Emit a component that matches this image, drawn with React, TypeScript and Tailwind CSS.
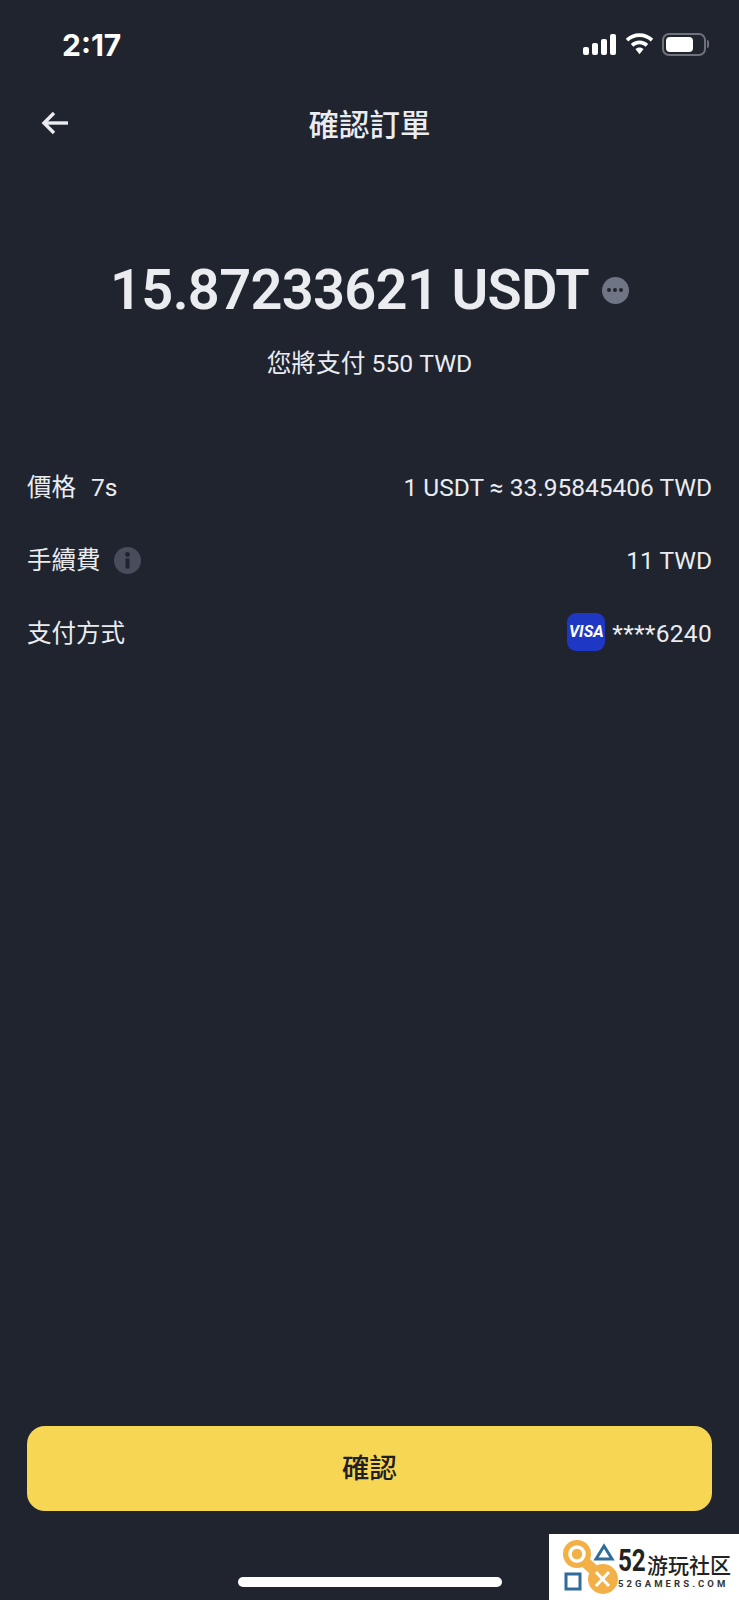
function SignalIcon() {
  return (
    <svg width="34" height="21" viewBox="0 0 34 21" fill="white">
      <rect x="0" y="13" width="6" height="8" rx="2" />
      <rect x="9" y="9" width="6" height="12" rx="2" />
      <rect x="18" y="5" width="6" height="16" rx="2" />
      <rect x="27" y="0" width="6" height="21" rx="2" />
    </svg>
  );
}

function WifiIcon() {
  return (
    <svg width="29" height="22" viewBox="0 0 30 22" fill="white">
      <path d="M15 0C9.5 0 4.5 2.1 0.8 5.6L3.4 8.4C6.4 5.6 10.5 3.8 15 3.8s8.6 1.8 11.6 4.6l2.6-2.8C25.5 2.1 20.5 0 15 0z" />
      <path d="M15 7.4c-3.5 0-6.7 1.4-9 3.6l2.7 2.8c1.6-1.6 3.9-2.6 6.3-2.6s4.7 1 6.3 2.6L24 11c-2.3-2.2-5.5-3.6-9-3.6z" />
      <path d="M15 14.6c-1.6 0-3.1 0.6-4.2 1.7L15 21.6l4.2-5.3c-1.1-1.1-2.6-1.7-4.2-1.7z" />
    </svg>
  );
}

function BatteryIcon() {
  return (
    <div className="flex items-center">
      <div className="flex h-[23px] w-[44px] items-center rounded-[7px] border-2 border-[#6f727a] p-[2px]">
        <div className="h-full w-[27px] rounded-[4px] bg-white" />
      </div>
      <div className="ml-[1px] h-[8px] w-[2px] rounded-r-full bg-[#6f727a]" />
    </div>
  );
}

function InfoIcon() {
  return (
    <svg className="mb-[3px] ml-[13px]" width="27" height="27" viewBox="0 0 27 27">
      <circle cx="13.5" cy="13.5" r="13.5" fill="#474d5b" />
      <circle cx="13.5" cy="7.5" r="2.4" fill="#20242f" />
      <rect x="11.5" y="11.5" width="4" height="10" fill="#20242f" />
    </svg>
  );
}

function Logo() {
  return (
    <svg width="58" height="56" viewBox="0 0 58 56">
      <circle cx="15" cy="15" r="14" fill="#f2b046" />
      <circle cx="41" cy="40" r="15" fill="#f2b046" />
      <path d="M22 22 L34 33" stroke="#f2b046" strokeWidth="11" />
      <circle cx="15" cy="15" r="7" fill="none" stroke="white" strokeWidth="3.5" />
      <path d="M42 7 L50 20 L34 20 Z" fill="none" stroke="#2f6c9c" strokeWidth="3" />
      <rect x="4" y="35" width="14" height="15" fill="none" stroke="#2f6c9c" strokeWidth="3" />
      <path d="M34 33 L47 47 M47 33 L34 47" stroke="white" strokeWidth="3" />
    </svg>
  );
}

function Row({ label, children }: { label: React.ReactNode; children: React.ReactNode }) {
  return (
    <div className="flex h-[73px] items-center justify-between text-[24.5px] text-[#eaecef]">
      <div className="flex items-center">{label}</div>
      <div className="flex items-center">{children}</div>
    </div>
  );
}

export default function App() {
  return (
    <div className="relative flex h-[1600px] w-[739px] flex-col overflow-hidden bg-[#20242f] font-['Roboto','Noto_Sans_CJK_TC',sans-serif] text-[#eaecef]">
      {/* status bar */}
      <div className="flex h-[90px] items-center justify-between pl-[62px] pr-[30px]">
        <span className="font-['Inter',sans-serif] text-[30px] font-bold text-white">2:17</span>
        <div className="mb-[2px] flex items-center gap-[8px]">
          <SignalIcon />
          <WifiIcon />
          <BatteryIcon />
        </div>
      </div>

      {/* header */}
      <div className="relative flex h-[70px] items-center justify-center">
        <button className="absolute left-[40px] top-[20px] text-[#eaecef]">
          <svg width="30" height="26" viewBox="0 0 30 26" fill="none" stroke="currentColor" strokeWidth="3.4">
            <path d="M28 13H4" />
            <path d="M14 3L4 13l10 10" />
          </svg>
        </button>
        <h1 className="mt-[2px] text-[30.5px] font-medium">確認訂單</h1>
      </div>

      {/* amount */}
      <div className="mt-[90px] flex items-center justify-center">
        <span className="text-[56px] font-semibold leading-[80px] tracking-[-0.7px]">15.87233621 USDT</span>
        <span className="ml-[13px] flex h-[27px] w-[27px] items-center justify-center gap-[2px] rounded-full bg-[#6f7585]">
          <i className="h-[4px] w-[4px] rounded-full bg-[#20242f]" />
          <i className="h-[4px] w-[4px] rounded-full bg-[#20242f]" />
          <i className="h-[4px] w-[4px] rounded-full bg-[#20242f]" />
        </span>
      </div>
      <div className="mt-[16px] text-center text-[24.7px] leading-[36px]">您將支付 550 TWD</div>

      {/* details */}
      <div className="mt-[70px] flex flex-col px-[27px]">
        <Row label={<><span>價格</span><span className="ml-[15px]">7s</span></>}>1 USDT ≈ 33.95845406 TWD</Row>
        <Row label={<><span>手續費</span><InfoIcon /></>}>11 TWD</Row>
        <Row label="支付方式">
          <span className="mb-[6px] mr-[7px] flex h-[38px] w-[38px] items-center justify-center rounded-[9px] bg-[#1e37c4] text-[16px] font-bold italic text-white">VISA</span>
          <span className="tracking-[0.3px]">****6240</span>
        </Row>
      </div>

      {/* confirm */}
      <div className="mt-auto px-[27px]">
        <button className="flex h-[85px] w-full items-center justify-center rounded-[18px] bg-[#f7d654] text-[27.5px] font-medium text-[#1e2026]">確認</button>
      </div>
      <div className="flex h-[89px] items-center justify-center pt-[53px]">
        <div className="h-[10px] w-[264px] rounded-full bg-white" />
      </div>

      {/* watermark */}
      <div className="absolute bottom-0 right-0 flex h-[66px] w-[190px] items-center bg-white pl-[13px]">
        <Logo />
        <div className="ml-[-2px] flex flex-col">
          <div className="flex items-end leading-none text-[#222]">
            <span className="inline-block w-[25px] origin-left scale-x-[0.78] text-[31px] font-bold leading-[30px]">52</span>
            <span className="ml-[4px] font-['Noto_Sans_CJK_SC',sans-serif] text-[21px] font-medium leading-[24px]">游玩社区</span>
          </div>
          <span className="mt-[3px] text-[9.5px] font-bold leading-[10px] tracking-[3.1px] text-[#333]">52GAMERS.COM</span>
        </div>
      </div>
    </div>
  );
}
